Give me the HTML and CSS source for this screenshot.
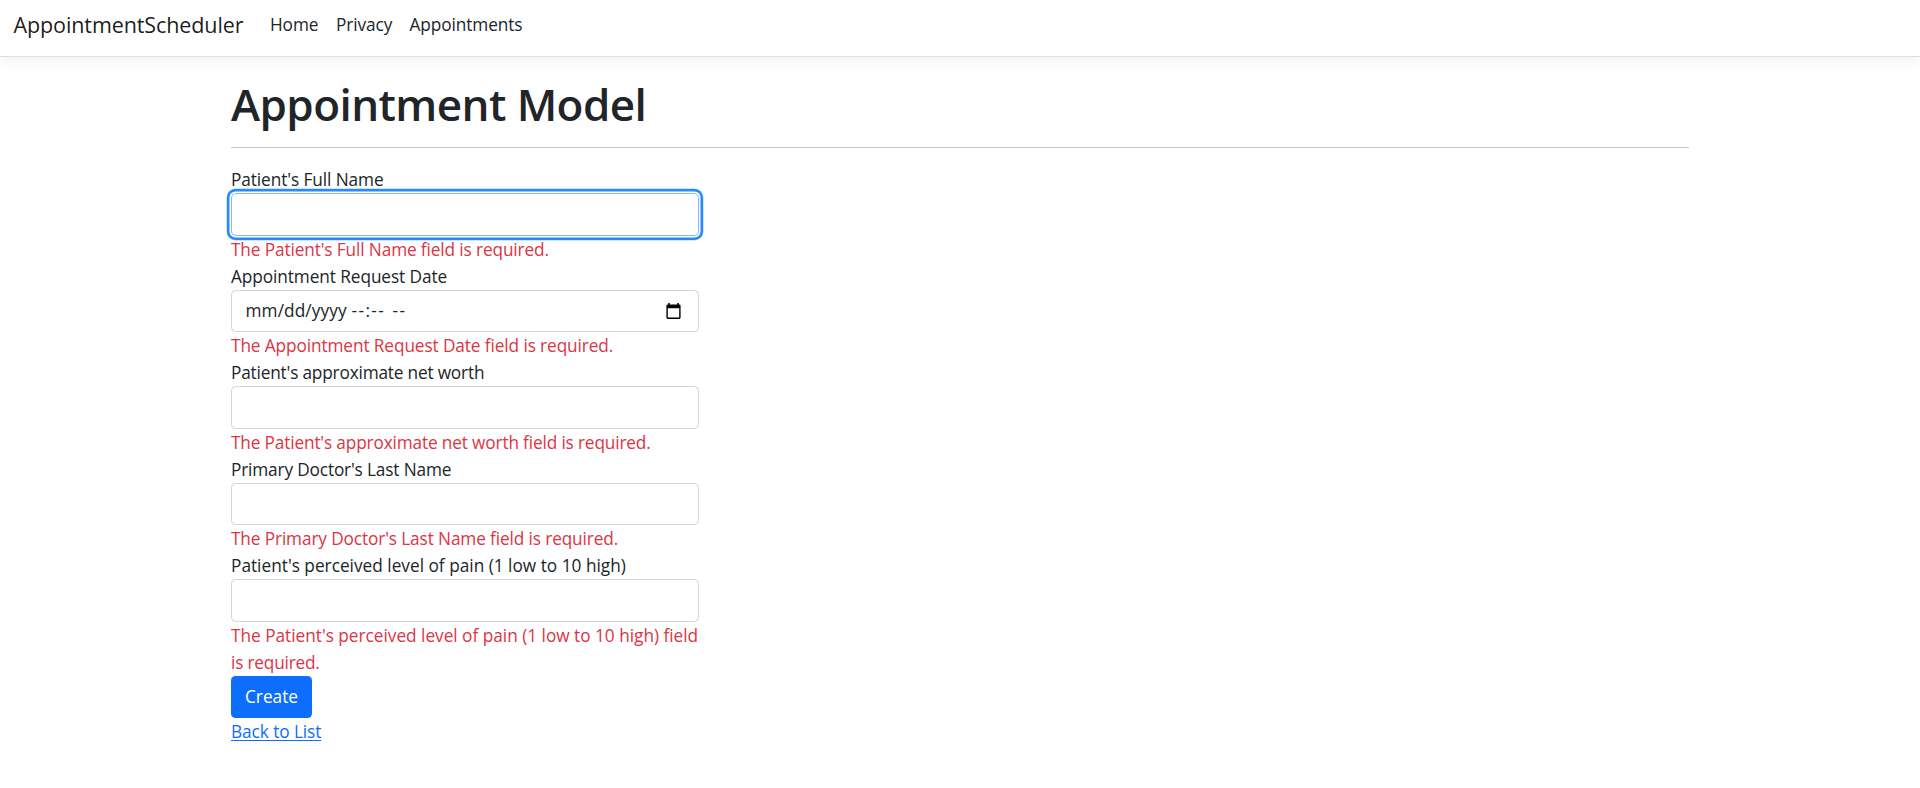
FILE: index.html
```
<!DOCTYPE html>
<html lang="en">
<head>
<meta charset="utf-8">
<title>Appointment Model - AppointmentScheduler</title>
<link rel="stylesheet" href="styles.css">
</head>
<body>
<header class="navbar">
  <a class="brand" href="#">AppointmentScheduler</a>
  <nav class="nav">
    <a class="nav-link home" href="#">Home</a>
    <a class="nav-link privacy" href="#">Privacy</a>
    <a class="nav-link" href="#">Appointments</a>
  </nav>
</header>
<main class="container">
  <h1 class="title">Appointment Model</h1>
  <hr class="rule">
  <form class="form">
    <div class="group">
      <label class="label" for="name">Patient's Full Name</label>
      <input class="control focused" id="name" type="text">
      <span class="error e-name">The Patient's Full Name field is required.</span>
    </div>
    <div class="group">
      <label class="label">Appointment Request Date</label>
      <div class="control date">
        <span class="date-part">mm/dd/yyyy</span>
        <span class="time-part">--:--</span>
        <span class="meridiem">--</span>
        <svg class="calendar" width="15" height="16" viewBox="0 0 15 16">
          <path d="M2.2 0h1.6v1.5h7.4V0h1.6v1.5H13.2Q14.6 1.5 14.6 2.9V14.6Q14.6 16 13.2 16H1.8Q.4 16 .4 14.6V2.9Q.4 1.5 1.8 1.5h.4zM1.8 5.2v9.4h11.4V5.2z" fill-rule="evenodd"/>
        </svg>
      </div>
      <span class="error e-date">The Appointment Request Date field is required.</span>
    </div>
    <div class="group">
      <label class="label l-worth" for="worth">Patient's approximate net worth</label>
      <input class="control" id="worth" type="text">
      <span class="error e-worth">The Patient's approximate net worth field is required.</span>
    </div>
    <div class="group">
      <label class="label l-doctor" for="doctor">Primary Doctor's Last Name</label>
      <input class="control" id="doctor" type="text">
      <span class="error e-doctor">The Primary Doctor's Last Name field is required.</span>
    </div>
    <div class="group">
      <label class="label l-pain" for="pain">Patient's perceived level of pain (1 low to 10 high)</label>
      <input class="control" id="pain" type="text">
      <span class="error e-pain">The Patient's perceived level of pain (1 low to 10 high) field<br><span class="last-line">is required.</span></span>
    </div>
    <button class="btn" type="button">Create</button>
  </form>
  <a class="back" href="#">Back to List</a>
</main>
</body>
</html>
```
FILE: styles.css
```
* { box-sizing: border-box; }
body {
  margin: 0;
  background: #fff;
  color: #212529;
  font: 400 17.25px/27px "Open Sans", "Noto Sans", sans-serif;
}
.navbar {
  display: flex;
  align-items: center;
  height: 57px;
  padding: 2px 13.5px 10px;
  border-bottom: 1px solid #dee2e6;
  box-shadow: 0 4.5px 13.5px rgba(0, 0, 0, .05);
}
.brand {
  width: 247.5px;
  color: rgba(0, 0, 0, .9);
  font-size: 21.5px;
  letter-spacing: -.1px;
  text-decoration: none;
}
.nav { display: flex; }
.nav-link {
  padding: 0 9px;
  color: #212529;
  text-decoration: none;
  letter-spacing: -.1px;
}
.home { width: 66px; }
.privacy { width: 73.5px; }
.container {
  width: 1485px;
  margin: 0 auto;
  padding: 20px 13.5px 0;
}
.title {
  margin: 0 0 16px;
  font-size: 44px;
  font-weight: 600;
  line-height: 54px;
  letter-spacing: -.57px;
}
.rule {
  height: 1px;
  margin: 0 0 18.2px;
  border: 0;
  background: #c4c5c6;
}
.form { width: 468px; }
.group { white-space: nowrap; }
.label { display: block; letter-spacing: -.09px; }
.control {
  display: block;
  width: 100%;
  height: 42.5px;
  padding: 6.75px 13.5px;
  border: 1px solid #ced4da;
  border-radius: 4.5px;
  background: #fff;
  color: #212529;
  font: inherit;
  outline: 0;
}
.focused {
  border-color: #86b7fe;
  box-shadow: 0 0 0 1.5px #fff, 0 0 0 4px #268aff, 0 0 0 4.5px #9ccaff;
}
.date { display: flex; align-items: center; padding-right: 17.5px; }
.date-part { width: 106px; letter-spacing: .1px; }
.time-part { width: 41px; letter-spacing: 1.4px; }
.meridiem { letter-spacing: 1.4px; }
.calendar { margin-left: auto; }
.error { display: block; color: #dc3545; }
.e-name { letter-spacing: -.13px; }
.e-date { letter-spacing: -.11px; }
.l-worth { letter-spacing: -.19px; }
.e-worth { letter-spacing: -.16px; }
.l-doctor { letter-spacing: -.16px; }
.e-doctor { letter-spacing: -.13px; }
.l-pain { letter-spacing: 0; }
.e-pain { letter-spacing: -.02px; }
.last-line { letter-spacing: -.2px; }
.btn {
  display: block;
  width: 81px;
  height: 42px;
  padding: 0;
  border: 0;
  border-radius: 4.5px;
  background: #0d6efd;
  color: #fff;
  font: inherit;
}
.back {
  display: inline-block;
  color: #0d6efd;
  letter-spacing: -.08px;
  text-underline-offset: 2px;
}
```
